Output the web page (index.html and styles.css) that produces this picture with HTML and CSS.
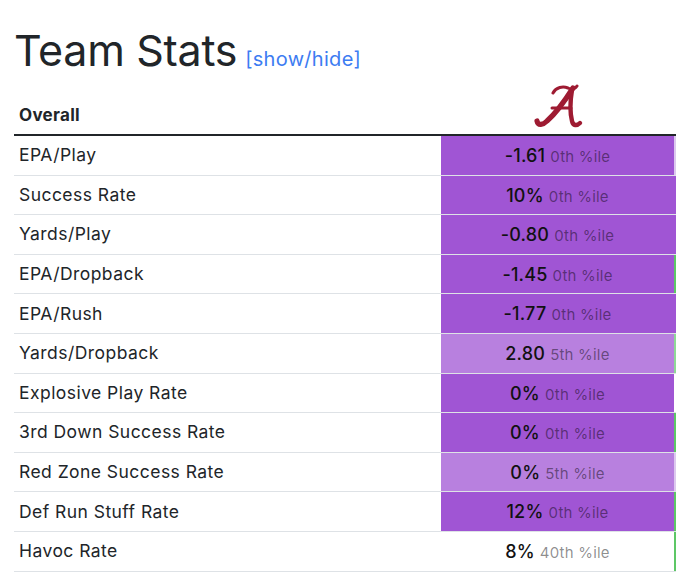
FILE: index.html
```html
<!DOCTYPE html>
<html>
<head>
<meta charset="utf-8">
<link rel="stylesheet" href="styles.css">
</head>
<body>
<div class="wrap">
  <div class="title"><span class="title-text">Team Stats</span><a class="toggle" href="#">[show/hide]</a></div>
  <div class="stats">
    <div class="row head">
      <div class="cell h-label">Overall</div>
      <div class="cell h-logo">
        <svg class="logo" width="52" height="46" viewBox="0 0 52 46">
          <g fill="none" stroke="#9e1b32" stroke-linecap="round">
            <path d="M21 9 C24 3 31 2 36 4 C40 6 43 5 45 2" stroke-width="3"/>
            <path d="M41 4 C34 15 23 30 15 37 C11 41 6 42 5 37" stroke-width="5.2"/>
            <path d="M40 6 C38 18 38 29 40 37 C41 42 45 42 48 39" stroke-width="4.4"/>
            <path d="M20 24 L39 24" stroke-width="3"/>
          </g>
        </svg>
      </div>
      <div class="cell"></div>
    </div>
    <div class="row"><div class="cell label">EPA/Play</div><div class="cell v p1"><b>-1.61</b><span class="pct">0th %ile</span></div><div class="cell lav"></div></div>
    <div class="row"><div class="cell label">Success Rate</div><div class="cell v p1"><b>10%</b><span class="pct">0th %ile</span></div><div class="cell p1"></div></div>
    <div class="row"><div class="cell label">Yards/Play</div><div class="cell v p1"><b>-0.80</b><span class="pct">0th %ile</span></div><div class="cell p1"></div></div>
    <div class="row"><div class="cell label">EPA/Dropback</div><div class="cell v p1"><b>-1.45</b><span class="pct">0th %ile</span></div><div class="cell grn"></div></div>
    <div class="row"><div class="cell label">EPA/Rush</div><div class="cell v p1"><b>-1.77</b><span class="pct">0th %ile</span></div><div class="cell p1"></div></div>
    <div class="row"><div class="cell label">Yards/Dropback</div><div class="cell v p2"><b>2.80</b><span class="pct">5th %ile</span></div><div class="cell lgrn"></div></div>
    <div class="row"><div class="cell label">Explosive Play Rate</div><div class="cell v p1"><b>0%</b><span class="pct">0th %ile</span></div><div class="cell"></div></div>
    <div class="row"><div class="cell label">3rd Down Success Rate</div><div class="cell v p1"><b>0%</b><span class="pct">0th %ile</span></div><div class="cell grn"></div></div>
    <div class="row"><div class="cell label">Red Zone Success Rate</div><div class="cell v p2"><b>0%</b><span class="pct">5th %ile</span></div><div class="cell lav"></div></div>
    <div class="row"><div class="cell label">Def Run Stuff Rate</div><div class="cell v p1"><b>12%</b><span class="pct">0th %ile</span></div><div class="cell grn"></div></div>
    <div class="row"><div class="cell label">Havoc Rate</div><div class="cell v"><b>8%</b><span class="pct">40th %ile</span></div><div class="cell grn"></div></div>
  </div>
</div>
</body>
</html>
```

FILE: styles.css
```css
html, body {
  margin: 0;
  padding: 0;
  background: #fff;
}
body {
  font-family: Inter, "Liberation Sans", sans-serif;
  color: #212529;
  overflow: hidden;
}
.wrap {
  width: 662px;
  padding-left: 14px;
  overflow: hidden;
}
.title {
  margin-top: 24px;
  height: 52px;
  display: flex;
  align-items: baseline;
  gap: 8px;
}
.title-text {
  font-size: 43px;
  line-height: 52px;
  letter-spacing: -0.3px;
  color: #212529;
}
.toggle {
  font-size: 20px;
  line-height: 24px;
  color: #3d7cf2;
  text-decoration: none;
  letter-spacing: 0.3px;
}
.stats {
  width: 720px;
}
.row {
  display: grid;
  grid-template-columns: 427px 233px 60px;
  height: 39.6px;
  box-sizing: border-box;
  border-bottom: 1px solid #dee2e6;
}
.row.head {
  height: 60px;
  border-bottom: 2px solid #212529;
}
.cell {
  display: flex;
  align-items: center;
  min-width: 0;
}
.h-label {
  align-items: flex-end;
  padding: 0 0 7px 5px;
  font-size: 17px;
  line-height: 24px;
  font-weight: 700;
  letter-spacing: 0.3px;
}
.h-logo {
  justify-content: center;
  align-items: flex-start;
  padding-top: 8px;
}
.logo { display: block; }
.label {
  padding-left: 5px;
  font-size: 17.5px;
  line-height: 24px;
  letter-spacing: 0.45px;
}
.v {
  justify-content: center;
  align-items: baseline;
  padding-top: 8px;
  box-sizing: border-box;
  gap: 5px;
  line-height: 24px;
}
.v b {
  font-weight: 500;
  font-size: 18px;
  color: #111;
  letter-spacing: 0.2px;
}
.pct {
  font-size: 15px;
  color: rgba(0, 0, 0, 0.45);
  letter-spacing: 0.2px;
}
.p1 { background: #a055d4; }
.p2 { background: #b880df; }
.lav { background: #dcc8ee; }
.grn { background: #5dc766; }
.lgrn { background: #8fd897; }
```
